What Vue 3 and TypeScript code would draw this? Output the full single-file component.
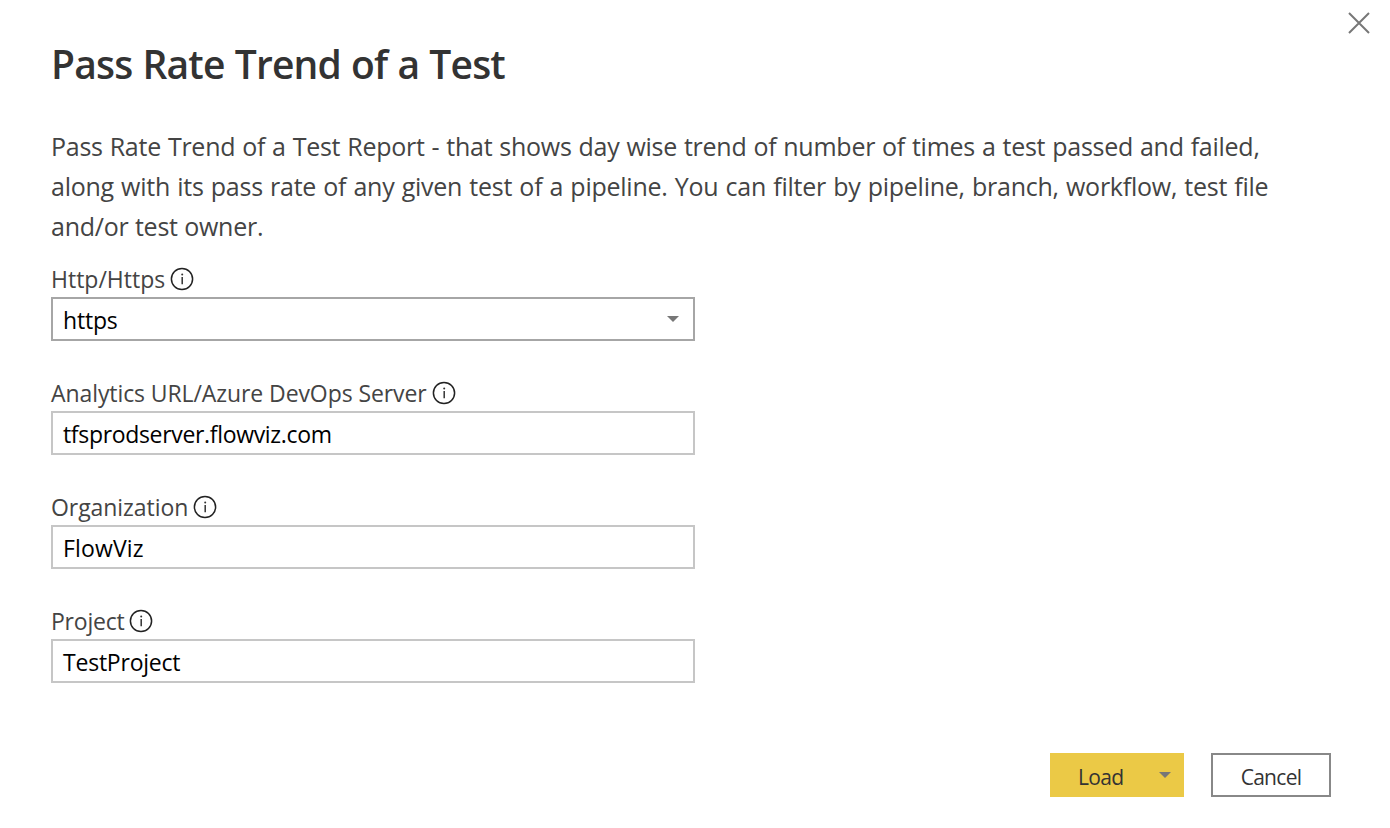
<script setup lang="ts">
import { ref } from 'vue'

interface Field {
  id: string
  label: string
  value: string
  select?: boolean
}

const description: string[] = [
  'Pass Rate Trend of a Test Report - that shows day wise trend of number of times a test passed and failed,',
  'along with its pass rate of any given test of a pipeline. You can filter by pipeline, branch, workflow, test file',
  'and/or test owner.',
]

const fields = ref<Field[]>([
  { id: 'protocol', label: 'Http/Https', value: 'https', select: true },
  { id: 'server', label: 'Analytics URL/Azure DevOps Server', value: 'tfsprodserver.flowviz.com' },
  { id: 'organization', label: 'Organization', value: 'FlowViz' },
  { id: 'project', label: 'Project', value: 'TestProject' },
])
</script>

<template>
  <main class="dialog">
    <button class="close" type="button" aria-label="Close">
      <svg width="22" height="22" viewBox="0 0 22 22">
        <path d="M1 1L21 21M21 1L1 21" fill="none" stroke="#777" stroke-width="2" />
      </svg>
    </button>
    <h1 class="title">Pass Rate Trend of a Test</h1>
    <p class="description">
      <span v-for="(line, i) in description" :key="i" class="line" :class="`line-${i}`">{{ line }}</span>
    </p>
    <form class="fields" @submit.prevent>
      <div v-for="field in fields" :key="field.id" class="field" :class="field.id">
        <div class="label-row">
          <span class="label">{{ field.label }}</span>
          <svg class="info" width="24" height="24" viewBox="0 0 24 24">
            <circle cx="12" cy="12" r="10.6" fill="none" stroke="#222" stroke-width="1.5" />
            <path d="M12.2 10v7.3" stroke="#333" stroke-width="1.5" />
            <circle cx="12.2" cy="7.4" r="1" fill="#333" />
          </svg>
        </div>
        <div class="box" :class="{ select: field.select }">
          <span class="value">{{ field.value }}</span>
          <svg v-if="field.select" class="arrow" width="12" height="6" viewBox="0 0 12 6">
            <path d="M0 0H12L6 6Z" fill="#777" />
          </svg>
        </div>
      </div>
    </form>
    <footer class="actions">
      <button class="load" type="button">
        <span class="load-text">Load</span>
        <svg class="load-arrow" width="12" height="6" viewBox="0 0 12 6">
          <path d="M0 0H12L6 6Z" fill="#777" />
        </svg>
      </button>
      <button class="cancel" type="button"><span class="cancel-text">Cancel</span></button>
    </footer>
  </main>
</template>

<style>
body {
  margin: 0;
  background: #fff;
}
</style>

<style scoped>
.dialog {
  position: relative;
  box-sizing: border-box;
  width: 1390px;
  height: 828px;
  padding: 36px 59px 31px 51px;
  display: flex;
  flex-direction: column;
  background: #fff;
  color: #444;
  font-family: "Open Sans", "Noto Sans", sans-serif;
  overflow: hidden;
  white-space: nowrap;
}
button {
  margin: 0;
  padding: 0;
  border: 0;
  background: none;
  color: inherit;
  font-family: inherit;
}
.close {
  position: absolute;
  top: 12px;
  right: 20px;
  width: 22px;
  height: 22px;
}
.close svg {
  display: block;
}
.title {
  margin: 0;
  height: 56px;
  line-height: 56px;
  font-size: 39px;
  font-weight: 600;
  letter-spacing: -0.8px;
  word-spacing: 0.7px;
  color: #333;
}
.description {
  margin: 34px 0 0;
  height: 120px;
  font-size: 25px;
  line-height: 40px;
  letter-spacing: -0.25px;
}
.line {
  display: block;
}
.line-0 {
  word-spacing: 0.68px;
}
.line-1 {
  word-spacing: 0.96px;
}
.line-2 {
  word-spacing: 0.25px;
}
.fields {
  margin-top: 17px;
  width: 644px;
  display: flex;
  flex-direction: column;
  gap: 36px;
}
.field {
  height: 78px;
}
.label-row {
  height: 34px;
  display: flex;
  align-items: center;
  gap: 5px;
  font-size: 23px;
  line-height: 34px;
}
.label {
  margin-top: -2px;
}
.info {
  flex: none;
  margin-top: -2px;
}
.box {
  box-sizing: border-box;
  height: 44px;
  padding: 2px 14px 0 10px;
  border: 2px solid #c6c6c6;
  display: flex;
  align-items: center;
  justify-content: space-between;
  font-size: 23px;
  line-height: 34px;
  color: #000;
}
.select {
  border-color: #a6a6a6;
}
.protocol .value {
  letter-spacing: -0.2px;
}
.server .label {
  letter-spacing: -0.09px;
}
.server .value {
  letter-spacing: -0.33px;
}
.organization .label {
  letter-spacing: -0.06px;
}
.organization .value {
  letter-spacing: 0.15px;
}
.project .label {
  letter-spacing: -0.22px;
}
.project .value {
  letter-spacing: -0.22px;
}
.arrow {
  margin-top: -2px;
}
.actions {
  margin-top: auto;
  display: flex;
  justify-content: flex-end;
  gap: 27px;
}
.load,
.cancel {
  box-sizing: border-box;
  height: 44px;
  display: flex;
  align-items: center;
  font-size: 21px;
  line-height: 30px;
  letter-spacing: -0.7px;
  color: #333;
}
.load {
  width: 134px;
  padding: 2px 13px 0 28px;
  justify-content: space-between;
  background: #ebc946;
}
.load-text {
  margin-top: 1px;
}
.load-arrow {
  margin-top: -2px;
}
.cancel {
  width: 120px;
  padding-top: 3px;
  justify-content: center;
  border: 2px solid #888;
}
</style>
